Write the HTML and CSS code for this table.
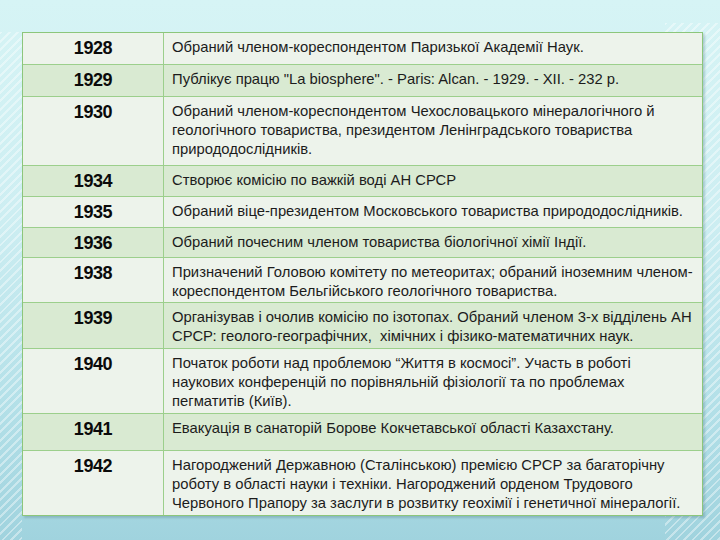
FILE: index.html
```html
<!DOCTYPE html>
<html lang="uk">
<head>
<meta charset="utf-8">
<title>Хронологія</title>
<link rel="stylesheet" href="styles.css">
</head>
<body>
<div class="slide">
  <div class="table">
    <div class="year odd">1928</div><div class="text odd">Обраний членом-кореспондентом Паризької Академії Наук.</div>
    <div class="year even">1929</div><div class="text even">Публікує працю "La biosphere". - Paris: Alcan. - 1929. - XII. - 232 p.</div>
    <div class="year odd">1930</div><div class="text odd">Обраний членом-кореспондентом Чехословацького мінералогічного й<br>геологічного товариства, президентом Ленінградського товариства<br>природодослідників.</div>
    <div class="year even">1934</div><div class="text even">Створює комісію по важкій воді АН СРСР</div>
    <div class="year odd">1935</div><div class="text odd">Обраний віце-президентом Московського товариства природодослідників.</div>
    <div class="year even">1936</div><div class="text even">Обраний почесним членом товариства біологічної хімії Індії.</div>
    <div class="year odd">1938</div><div class="text odd">Призначений Головою комітету по метеоритах; обраний іноземним членом-<br>кореспондентом Бельгійського геологічного товариства.</div>
    <div class="year even">1939</div><div class="text even">Організував і очолив комісію по ізотопах. Обраний членом 3-х відділень АН<br>СРСР: геолого-географічних,&nbsp; хімічних і фізико-математичних наук.</div>
    <div class="year odd">1940</div><div class="text odd">Початок роботи над проблемою “Життя в космосі”. Участь в роботі<br>наукових конференцій по порівняльній фізіології та по проблемах<br>пегматитів (Київ).</div>
    <div class="year even">1941</div><div class="text even">Евакуація в санаторій Борове Кокчетавської області Казахстану.</div>
    <div class="year odd last">1942</div><div class="text odd last">Нагороджений Державною (Сталінською) премією СРСР за багаторічну<br>роботу в області науки і техніки. Нагороджений орденом Трудового<br>Червоного Прапору за заслуги в розвитку геохімії і генетичної мінералогії.</div>
  </div>
</div>
</body>
</html>
```
FILE: styles.css
```css
html, body {
  margin: 0;
  padding: 0;
}
body {
  width: 720px;
  height: 540px;
  overflow: hidden;
  background:
    repeating-linear-gradient(135deg, rgba(255,255,255,0.4) 0 2px, rgba(255,255,255,0) 2px 6px) left 0 top 32px / 22px 508px no-repeat,
    repeating-linear-gradient(135deg, rgba(255,255,255,0.4) 0 2px, rgba(255,255,255,0) 2px 6px) left 665px top 23px / 55px 517px no-repeat,
    linear-gradient(180deg, #d6f4f5 0%, #cdeef2 40%, #b3e0e8 75%, #a0d3de 100%);
  font-family: "Liberation Sans", Arial, sans-serif;
}
.slide {
  padding: 32px 0 0 22px;
}
.table {
  width: 681px;
  display: grid;
  grid-template-columns: 141px 1fr;
  grid-template-rows: 32px 32px 69px 31px 31px 30px 45px 46px 65px 37px 64px;
  border: 1px solid #8cc67b;
  box-sizing: border-box;
  box-shadow: 2px 2px 2px rgba(90, 130, 140, 0.35);
}
.year, .text {
  border-bottom: 1px solid #9ccf8c;
  box-sizing: border-box;
  color: #151515;
}
.last {
  border-bottom: none;
}
.odd {
  background: #edf3eb;
}
.even {
  background: #d9ead2;
}
.year {
  border-right: 1px solid #9ccf8c;
  text-align: center;
  font-weight: bold;
  font-size: 18px;
  line-height: 20px;
  padding-top: 5px;
  color: #0a0a0a;
  letter-spacing: -0.4px;
}
.text {
  font-size: 14.8px;
  line-height: 19px;
  padding: 5px 0 0 8px;
  white-space: nowrap;
  color: #1c1c1c;
}
```
